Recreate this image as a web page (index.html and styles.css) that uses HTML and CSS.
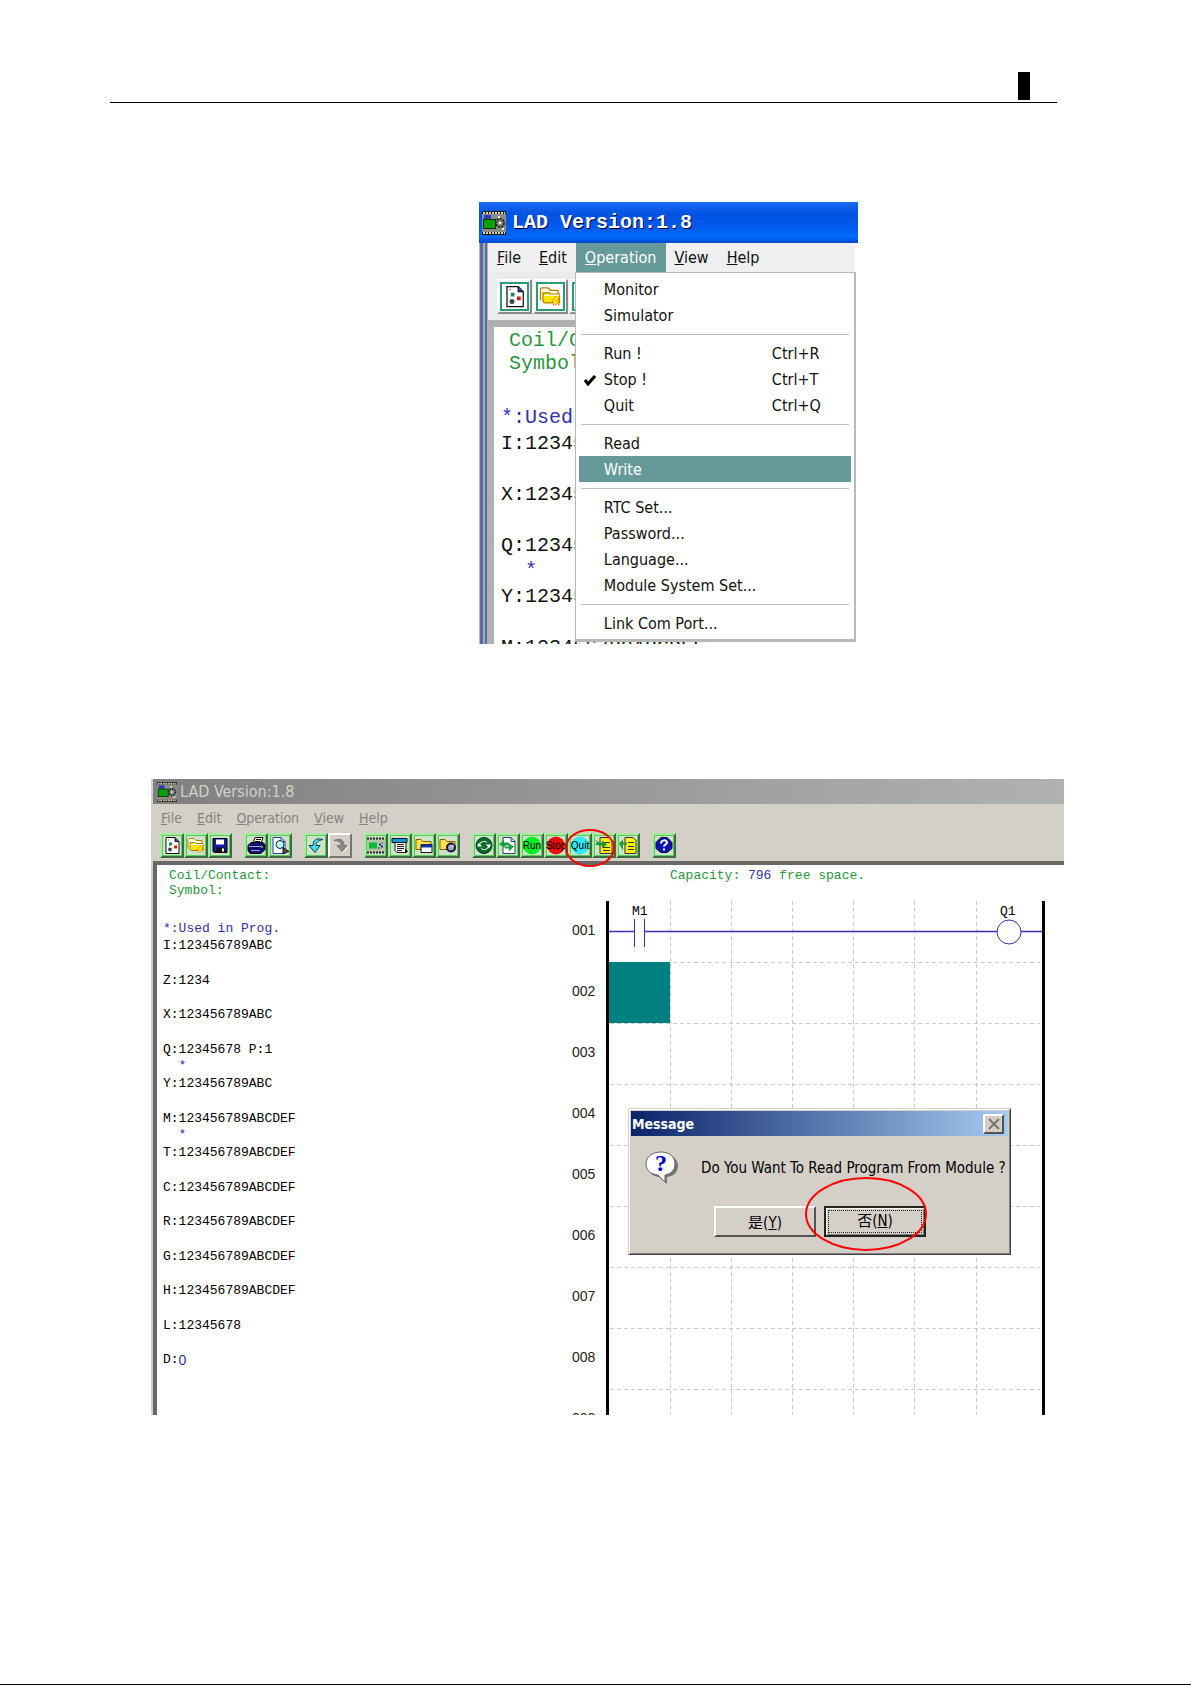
FILE: index.html
```html
<!DOCTYPE html>
<html lang="en">
<head>
<meta charset="utf-8">
<title>LAD Version:1.8</title>
<link rel="stylesheet" href="styles.css">
</head>
<body>
<svg class="defs" aria-hidden="true">
  <symbol id="chip" viewBox="0 0 24 24">
    <path d="M0 0h24v24H0z" fill="#222"/>
    <path d="M0 3h24v18H0z" fill="#8c8c84"/>
    <path d="M1 2h22M1 22h22" stroke="#d0d0b8" stroke-width="2" stroke-dasharray="2 1"/>
    <path d="M2 4h7v4H2z" fill="#2840c0"/>
    <path d="M1 8h13v10H1z" fill="#083008"/><path d="M2 9h11v8H2z" fill="#08a008"/>
    <circle cx="18" cy="12" r="4" fill="none" stroke="#222" stroke-width="2" stroke-dasharray="2 1"/>
    <path d="M17 11h2v2h-2zM16 5h2v2h-2zM20 17h2v2h-2z" fill="#eee"/>
  </symbol>
  <symbol id="new" viewBox="0 0 20 20">
    <path d="M4 2h9l4 4v12H4z" fill="#fff" stroke="#111"/>
    <path d="M13 2v4h4" fill="#35a" stroke="#111"/>
    <path d="M7 7h3v3H7z" fill="#198a55"/><path d="M12 10h3v3h-3z" fill="#e11"/>
    <circle cx="8" cy="14" r="2" fill="#445"/><path d="M6 4h1v1H6z" fill="#e11"/>
  </symbol>
  <symbol id="open" viewBox="0 0 20 20">
    <path d="M2 13V4l1-1h5l2 2h6v3" fill="#ffd" stroke="#b08000"/>
    <path d="M4 14V7h5l1 1h7v7H5z" fill="#ffe600" stroke="#b08000"/>
    <path d="M5 9h12" stroke="#fff"/>
    <path d="M14 10v8M11 14h7M12 12l5 5M17 12l-5 5" stroke="#f50" stroke-dasharray="1 1"/>
    <circle cx="14" cy="14" r="2" fill="#fd0"/>
  </symbol>
  <symbol id="save" viewBox="0 0 20 20">
    <path d="M3 3h14v14H4l-1-1z" fill="#1818a0" stroke="#000"/>
    <path d="M6 4h8v5H6z" fill="#fff"/><path d="M6 12h9v5H6z" fill="#111"/><path d="M12 13h2v3h-2z" fill="#fff"/>
  </symbol>
  <symbol id="print" viewBox="0 0 20 20">
    <path d="M7 8l2-6h8l-2 6z" fill="#fff" stroke="#000"/>
    <path d="M10 4h5M9 6h5" stroke="#000"/>
    <path d="M2 10l3-3h12l2 2v5l-4 4H4l-2-3z" fill="#101070" stroke="#000"/>
    <path d="M3 11h12M5 15h9" stroke="#9ad" stroke-width="1"/><path d="M15 11h2v1h-2z" fill="#fe0"/>
  </symbol>
  <symbol id="preview" viewBox="0 0 20 20">
    <path d="M3 2h8l4 4v12H3z" fill="#fff" stroke="#24a"/>
    <path d="M11 2v4h4" fill="none" stroke="#24a"/>
    <circle cx="10" cy="9" r="4" fill="#bff" stroke="#122"/>
    <path d="M13 12l6 4-6 2z" fill="#555" stroke="#111"/>
  </symbol>
  <symbol id="undo" viewBox="0 0 20 20">
    <path d="M17 4C10 2 7 5 7 10H3l6 7 5-7h-4c0-3 2-5 7-6z" fill="#3de0f0" stroke="#134"/>
  </symbol>
  <symbol id="redo" viewBox="0 0 20 20">
    <path d="M4 5c7-3 10 0 10 5h3l-5 6-5-6h4c0-3-2-5-7-5z" fill="#888" stroke="#777"/>
    <path d="M13 17l5-6" stroke="#fff"/>
  </symbol>
  <symbol id="ladder" viewBox="0 0 20 20">
    <path d="M1 3h18v14H1z" fill="#b8c4b0"/>
    <path d="M1 3h18M1 17h18" stroke="#222" stroke-width="2" stroke-dasharray="2 1"/>
    <path d="M3 7h8v6H3z" fill="#0b3"/><path d="M13 8h2v2h-2zM15 10h2v2h-2zM12 12h2v1h-2zM16 7h1v1h-1z" fill="#138"/>
  </symbol>
  <symbol id="list" viewBox="0 0 20 20">
    <path d="M2 3h15v4H2z" fill="#19c" stroke="#111"/>
    <path d="M5 7h11v10H7l-2-2z" fill="#fff" stroke="#111"/>
    <path d="M7 9h7M7 11h7M7 13h7M7 15h5" stroke="#222"/><path d="M15 13l3 3-3 2z" fill="#111"/>
  </symbol>
  <symbol id="folderwin" viewBox="0 0 20 20">
    <path d="M2 14V4h5l2 2h8v8z" fill="#ffe14a" stroke="#8a5a00"/>
    <path d="M7 9h11v8H7z" fill="#fff" stroke="#111"/><path d="M7 9h11v3H7z" fill="#13a"/>
  </symbol>
  <symbol id="foldercog" viewBox="0 0 20 20">
    <path d="M2 14V4h5l2 2h8v8z" fill="#ffe14a" stroke="#8a5a00"/>
    <circle cx="13" cy="12" r="4" fill="#9ab" stroke="#114" stroke-width="2"/><path d="M13 12l3-3" stroke="#fff"/>
  </symbol>
  <symbol id="monitor" viewBox="0 0 20 20">
    <circle cx="10" cy="10" r="8" fill="#0a6a28" stroke="#033"/>
    <path d="M5 10a5 5 0 0 1 8-3M15 10a5 5 0 0 1-8 3" fill="none" stroke="#fff" stroke-width="1"/>
    <path d="M12 9h5l-2 4zM3 11h5L5 7z" fill="#fff"/>
  </symbol>
  <symbol id="simulate" viewBox="0 0 20 20">
    <path d="M5 2h8l4 4v12H5z" fill="#fff" stroke="#246"/><path d="M13 2v4h4" fill="none" stroke="#246"/>
    <path d="M1 9l5-5v3h5v3H7v2z" fill="#1a9a40"/><path d="M16 11l-5 5v-3H7v-2h4V8z" fill="#1a9a40"/>
  </symbol>
  <symbol id="run" viewBox="0 0 20 20"><circle cx="10" cy="10" r="9" fill="#0e2"/></symbol>
  <symbol id="stop" viewBox="0 0 20 20"><circle cx="10" cy="10" r="9" fill="#e80c0c"/></symbol>
  <symbol id="quit" viewBox="0 0 20 20"><circle cx="10" cy="10" r="9" fill="#2fe6f4"/></symbol>
  <symbol id="write" viewBox="0 0 20 20">
    <path d="M6 2h9l3 3v13H6z" fill="#ffee10" stroke="#333"/>
    <path d="M9 7h7M9 12h7M9 15h7" stroke="#333"/><path d="M1 4l4 3h3V5l5 4-5 4v-3H5L1 9l2-2z" fill="#1c9a3a"/>
  </symbol>
  <symbol id="read" viewBox="0 0 20 20">
    <path d="M7 2h8l3 3v13H7z" fill="#ffee10" stroke="#333"/>
    <path d="M10 7h6M10 11h6M10 14h6" stroke="#333"/><path d="M1 8l4-4v3h4v2H5v6z" fill="#1c9a3a"/>
  </symbol>
  <symbol id="help" viewBox="0 0 20 20">
    <path d="M7 2h6l5 5v6l-5 4H7l-5-4V7z" fill="#0a14b0" stroke="#003"/>
    <path d="M7 8c0-4 6-4 6-1 0 2-3 2-3 4M10 13v2" fill="none" stroke="#fff" stroke-width="2"/>
  </symbol>
</svg>

<div class="page">
  <header class="page-head"><span class="page-mark"></span></header>

  <main>
    <section class="win xp" aria-label="Operation menu">
      <div class="xp-title"><svg class="xp-logo"><use href="#chip"/></svg><h2>LAD Version:1.8</h2></div>
      <div class="xp-frame">
        <nav class="xp-menu">
          <button><u>F</u>ile</button>
          <button><u>E</u>dit</button>
          <div class="menu-open">
            <button class="active"><u>O</u>peration</button>
            <ul class="drop">
              <li><button>Monitor</button></li>
              <li><button>Simulator</button></li>
              <li class="sep"></li>
              <li><button>Run !<kbd>Ctrl+R</kbd></button></li>
              <li><button><svg class="tick" viewBox="0 0 12 12"><path d="M1 6l3 4 7-8" fill="none" stroke="#000" stroke-width="3"/></svg>Stop !<kbd>Ctrl+T</kbd></button></li>
              <li><button>Quit<kbd>Ctrl+Q</kbd></button></li>
              <li class="sep"></li>
              <li><button>Read</button></li>
              <li><button class="hot">Write</button></li>
              <li class="sep"></li>
              <li><button>RTC Set...</button></li>
              <li><button>Password...</button></li>
              <li><button>Language...</button></li>
              <li><button>Module System Set...</button></li>
              <li class="sep"></li>
              <li><button>Link Com Port...</button></li>
            </ul>
          </div>
          <button><u>V</u>iew</button>
          <button><u>H</u>elp</button>
        </nav>
        <div class="xp-tools">
          <button aria-label="New"><svg><use href="#new"/></svg></button>
          <button aria-label="Open"><svg><use href="#open"/></svg></button>
          <button aria-label="Save"><svg><use href="#save"/></svg></button>
        </div>
        <div class="xp-sheet">
          <p class="info">Coil/Contact:<br>Symbol:</p>
          <p class="used">*:Used in Prog.</p>
          <ul class="regs">
            <li>I:123456789ABC</li>
            <li>X:123456789ABC</li>
            <li>Q:12345678<i>*</i></li>
            <li>Y:123456789ABC</li>
            <li>M:123456789ABCDEF</li>
          </ul>
        </div>
      </div>
    </section>

    <section class="win classic" aria-label="Read program">
      <div class="c-title"><svg><use href="#chip"/></svg><h2>LAD Version:1.8</h2></div>
      <nav class="c-menu">
        <button><u>F</u>ile</button><button><u>E</u>dit</button><button><u>O</u>peration</button><button><u>V</u>iew</button><button><u>H</u>elp</button>
      </nav>
      <div class="c-tools">
        <div class="group">
          <button aria-label="New"><svg><use href="#new"/></svg></button>
          <button aria-label="Open"><svg><use href="#open"/></svg></button>
          <button aria-label="Save"><svg><use href="#save"/></svg></button>
        </div>
        <div class="group">
          <button aria-label="Print"><svg><use href="#print"/></svg></button>
          <button aria-label="Preview"><svg><use href="#preview"/></svg></button>
        </div>
        <div class="group">
          <button aria-label="Undo"><svg><use href="#undo"/></svg></button>
          <button class="off" aria-label="Redo"><svg><use href="#redo"/></svg></button>
        </div>
        <div class="group">
          <button aria-label="Ladder"><svg><use href="#ladder"/></svg></button>
          <button aria-label="List"><svg><use href="#list"/></svg></button>
          <button aria-label="Windows"><svg><use href="#folderwin"/></svg></button>
          <button aria-label="Settings"><svg><use href="#foldercog"/></svg></button>
        </div>
        <div class="group">
          <button aria-label="Monitor"><svg><use href="#monitor"/></svg></button>
          <button aria-label="Simulator"><svg><use href="#simulate"/></svg></button>
          <button class="word"><svg><use href="#run"/></svg><span>Run</span></button>
          <button class="word"><svg><use href="#stop"/></svg><span>Stop</span></button>
          <button class="word"><svg><use href="#quit"/></svg><span>Quit</span>
            <svg class="ring ring-small" viewBox="0 0 50 40"><ellipse cx="25" cy="20" rx="24" ry="18"/></svg></button>
          <button aria-label="Write"><svg><use href="#write"/></svg></button>
          <button aria-label="Read"><svg><use href="#read"/></svg></button>
        </div>
        <div class="group"><button aria-label="Help"><svg><use href="#help"/></svg></button></div>
      </div>
      <div class="c-sheet">
        <div class="status">
          <p class="info">Coil/Contact:<br>Symbol:</p>
          <p class="used">*:Used in Prog.</p>
          <ul class="regs">
            <li>I:123456789ABC</li>
            <li>Z:1234</li>
            <li>X:123456789ABC</li>
            <li>Q:12345678 P:1<i>*</i></li>
            <li>Y:123456789ABC</li>
            <li>M:123456789ABCDEF<i>*</i></li>
            <li>T:123456789ABCDEF</li>
            <li>C:123456789ABCDEF</li>
            <li>R:123456789ABCDEF</li>
            <li>G:123456789ABCDEF</li>
            <li>H:123456789ABCDEF</li>
            <li>L:12345678</li>
            <li>D:<b>0</b></li>
          </ul>
        </div>
        <div class="program">
          <p class="capacity">Capacity: <b>796</b> free space.</p>
          <div class="rungs">
            <ol class="numbers">
              <li>001</li><li>002</li><li>003</li><li>004</li><li>005</li><li>006</li><li>007</li><li>008</li><li>009</li>
            </ol>
            <svg class="diagram" viewBox="0 0 440 514" role="img" aria-label="Ladder diagram">
              <g stroke="#c8c8c8" stroke-dasharray="4 3">
                <path d="M64.500 0v514M125.500 0v514M186.500 0v514M247.500 0v514M308.500 0v514M370.500 0v514"/>
                <path d="M4 61.500h430M4 122.500h430M4 183.500h430M4 244.500h430M4 305.500h430M4 366.500h430M4 427.500h430M4 488.500h430"/>
              </g>
              <path d="M3 61h61v61H3z" fill="#008080"/>
              <g fill="none" stroke="#3a2fb8">
                <path d="M3 30.500h25M39 30.500h352M415 30.500h21" stroke-width="1.500"/>
                <path d="M28.500 18v28M38.500 18v28"/>
                <circle cx="403" cy="31" r="12"/>
              </g>
              <path d="M1.500 0v514M437.500 0v514" stroke="#000" stroke-width="3"/>
              <text x="26" y="14">M1</text><text x="394" y="14">Q1</text>
            </svg>
            <div class="dialog" role="dialog" aria-label="Message">
              <div class="d-title"><h3>Message</h3><button class="close" aria-label="Close"><svg viewBox="0 0 12 12"><path d="M1 1l10 10M11 1L1 11" stroke="#77756f" stroke-width="2"/></svg></button></div>
              <div class="d-text">
                <svg class="bubble" viewBox="0 0 34 34">
                  <path d="M18 3c9 0 15 5 15 12 0 6-4 10-11 11v7l-8-7C7 25 3 21 3 15 3 8 9 3 18 3z" fill="#77756f"/>
                  <path d="M16 1c9 0 14 5 14 12 0 6-4 10-10 11v7l-7-7C5 23 1 19 1 13 1 6 7 1 16 1z" fill="#fff" stroke="#666"/>
                  <text x="16" y="20" text-anchor="middle">?</text>
                </svg>
                <p>Do You Want To Read Program From Module ?</p>
              </div>
              <div class="d-buttons">
                <button>是(<u>Y</u>)</button>
                <button class="default"><span>否(<u>N</u>)</span>
                  <svg class="ring ring-large" viewBox="0 0 122 74"><ellipse cx="61" cy="37" rx="60" ry="36"/></svg></button>
              </div>
            </div>
          </div>
        </div>
      </div>
    </section>
  </main>
</div>
</body>
</html>
```
FILE: styles.css
```css
* { box-sizing: border-box; }
body { margin: 0; background: #fff; color: #000; }
h2, h3, p, ul, ol { margin: 0; padding: 0; }
ul, ol { list-style: none; }
svg { display: block; }
button { margin: 0; padding: 0; border: 0; background: none; color: inherit; font: inherit; }
.defs { position: absolute; width: 0; height: 0; }

.page { min-height: 100vh; border-bottom: 1px solid #000; }
.page-head {
  display: flex; justify-content: flex-end; height: 103px;
  margin: 0 134px 0 110px; padding: 72px 27px 2px 0; border-bottom: 1px solid #000;
}
.page-mark { width: 12px; height: 28px; background: #000; }
main { padding: 99px 127px 0 151px; }

.win { overflow: hidden; font-family: "DejaVu Sans Condensed", "Noto Sans CJK SC", sans-serif; }
.info, .used, .regs, .capacity { font-family: "Liberation Mono", monospace; white-space: nowrap; }
.info, .capacity { color: #2c9440; }
.used, .regs i, .regs b, .capacity b { color: #3330a8; font-style: normal; font-weight: 400; }
.regs li { display: flex; flex-direction: column; }
.regs i { padding-left: 2ch; }

/* Window with the open menu */
.xp { width: 379px; height: 442px; margin-left: 328px; color: #111; font-size: 16px; }
.xp-title {
  display: flex; align-items: center; gap: 6px; height: 41px; padding: 0 3px;
  background: linear-gradient(#1c6af2, #0052e0 30%, #0058ee 60%, #006aff 85%, #0046c8);
}
.xp-logo { width: 24px; height: 24px; }
.xp-title h2 { color: #fff; font: 700 20px/24px "Liberation Mono", monospace; text-shadow: 1px 1px #003; }
.xp-frame {
  height: 401px; margin-right: 3px; padding-left: 9px;
  background: linear-gradient(90deg, #a9bccb 1px, #666699 1px 4px, #8fb4c8 4px 6px, #666699 6px 8px, #b0b0b0 8px);
}
.xp-menu { display: flex; height: 29px; background: #f0f0f0; }
.xp-menu > button, .menu-open > button { height: 29px; padding: 0 9px; }
.menu-open { position: relative; }
.active, .hot { background: #669999; color: #fff; }
.drop {
  position: absolute; z-index: 1; left: -1px; top: 29px; width: 281px; padding: 3px;
  background: #fff; border: 1px solid #b8b8b8; border-width: 1px 2px 3px 1px;
}
.drop button { position: relative; display: flex; justify-content: space-between; align-items: center; width: 100%; height: 26px; padding: 0 29px 0 25px; }
.drop kbd { width: 50px; font: inherit; text-align: left; }
.drop .sep { height: 1px; margin: 6px 2px 5px; background: #bcbcbc; }
.tick { position: absolute; left: 5px; top: 8px; width: 12px; height: 12px; }
.xp-tools { display: flex; gap: 1px; height: 48px; padding: 7px 0 0 9px; background: #ececec; }
.xp-tools button { flex: none; width: 35px; height: 35px; padding: 1px; border: 2px solid; border-color: #fff #8a8a8a #8a8a8a #fff; background: #f4f4f4; }
.xp-tools svg { width: 29px; height: 29px; border: 2px solid #2c9c74; background: #fff; }
.xp-sheet { height: 324px; margin-left: -1px; padding: 7px 0 0 7px; background: #b0b0b0; font-size: 20px; }
.xp-sheet > * { padding-left: 7px; background: #fff; }
.xp-sheet .info { height: 76px; padding: 2px 0 0 15px; line-height: 23px; }
.xp-sheet .used { padding-top: 2px; line-height: 26px; }
.xp-sheet .regs { line-height: 26px; }
.xp-sheet .regs li { height: 51px; }
.xp-sheet .regs i { line-height: 24px; }

/* Window with the message box */
.classic { display: flex; flex-direction: column; height: 636px; margin-top: 135px; border-left: 2px solid #d4d0c8; background: #d4d0c8; font-size: 15px; }
.c-title { display: flex; align-items: center; gap: 3px; height: 25px; padding-left: 4px; background: linear-gradient(90deg, #808080, #b0b2b0); color: #d4d0c8; }
.c-title svg { width: 20px; height: 20px; }
.c-title h2 { font-size: 16px; font-weight: 400; }
.c-menu { display: flex; gap: 15px; height: 28px; margin-bottom: 1px; padding-left: 8px; color: #85827c; font-size: 14px; }
.c-tools { display: flex; gap: 12px; height: 28px; padding-left: 7px; }
.group { display: flex; height: 25px; }
.group button { position: relative; width: 24px; height: 25px; border: 2px solid; border-color: #a6eca0 #3d6b3d #3d6b3d #a6eca0; background: #cfe3c8; box-shadow: inset 0 0 0 1px #5cc860; }
.group button > svg { width: 20px; height: 21px; }
.group .off { border-color: #fff #77756f #77756f #fff; background: #d4d0c8; box-shadow: none; }
.word span { position: absolute; inset: 5px -4px auto; font: 10px/11px "Liberation Sans", sans-serif; text-align: center; }
.ring { position: absolute; z-index: 2; overflow: visible; fill: none; stroke: #f00; stroke-width: 2; pointer-events: none; }
.group button > .ring-small { left: -5px; top: -7px; width: 50px; height: 40px; }
.c-sheet { flex: 1; display: flex; min-height: 0; overflow: hidden; border: solid #6a6866; border-width: 4px 0 0 4px; background: #fff; font-size: 13px; }
.status { flex: 1; }
.status > * { padding-left: 6px; }
.status .info { height: 55px; padding: 3px 0 0 12px; line-height: 15px; }
.status .used { line-height: 18px; }
.status .regs { display: grid; grid-auto-rows: 1fr; height: 449px; line-height: 16px; }
.regs b { font-family: "Liberation Sans", sans-serif; font-size: 14px; }
.regs li:has(b) { flex-direction: row; }
.program { flex: none; width: 494px; }
.capacity { height: 36px; padding: 3px 0 0 100px; line-height: 15px; }
.rungs { position: relative; display: flex; }
.numbers { width: 36px; padding-left: 2px; color: #222; font: 14px/58px "Liberation Sans", sans-serif; }
.numbers li { height: 61px; }
.diagram { width: 440px; height: 514px; font: 13px "Liberation Mono", monospace; }

.dialog {
  position: absolute; left: 58px; top: 207px; width: 383px; height: 147px; padding: 2px;
  border: 1px solid; border-color: #d4d0c8 #444 #444 #d4d0c8; background: #d4d0c8;
  box-shadow: inset 1px 1px #fff, inset -1px -1px #808080;
}
.d-title { display: flex; align-items: center; justify-content: space-between; height: 25px; padding: 0 4px 0 1px; background: linear-gradient(90deg, #0a246a, #a6caf0); color: #fff; }
.d-title h3 { font-size: 14px; font-weight: 700; }
.close { display: grid; place-items: center; width: 21px; height: 20px; border: 2px solid; border-color: #fff #55534f #55534f #fff; background: #d4d0c8; }
.close svg { width: 12px; height: 12px; }
.d-text { display: flex; gap: 22px; height: 70px; padding: 15px 0 0 14px; font-size: 15px; }
.d-text p { line-height: 34px; white-space: nowrap; }
.bubble { width: 34px; height: 34px; fill: #00c; font: 700 24px "Liberation Serif", serif; }
.d-buttons { display: flex; justify-content: center; gap: 8px; padding-left: 1px; font-size: 15px; }
.d-buttons button { position: relative; width: 102px; height: 31px; border: 2px solid; border-color: #fff #55534f #55534f #fff; background: #d4d0c8; }
.d-buttons .default { border-color: #222; box-shadow: inset 1px 1px #fff, inset -1px -1px #808080; }
.default span { display: block; margin: 2px; border: 1px dotted #222; line-height: 21px; }
.ring-large { left: -21px; top: -31px; width: 122px; height: 74px; }
```
